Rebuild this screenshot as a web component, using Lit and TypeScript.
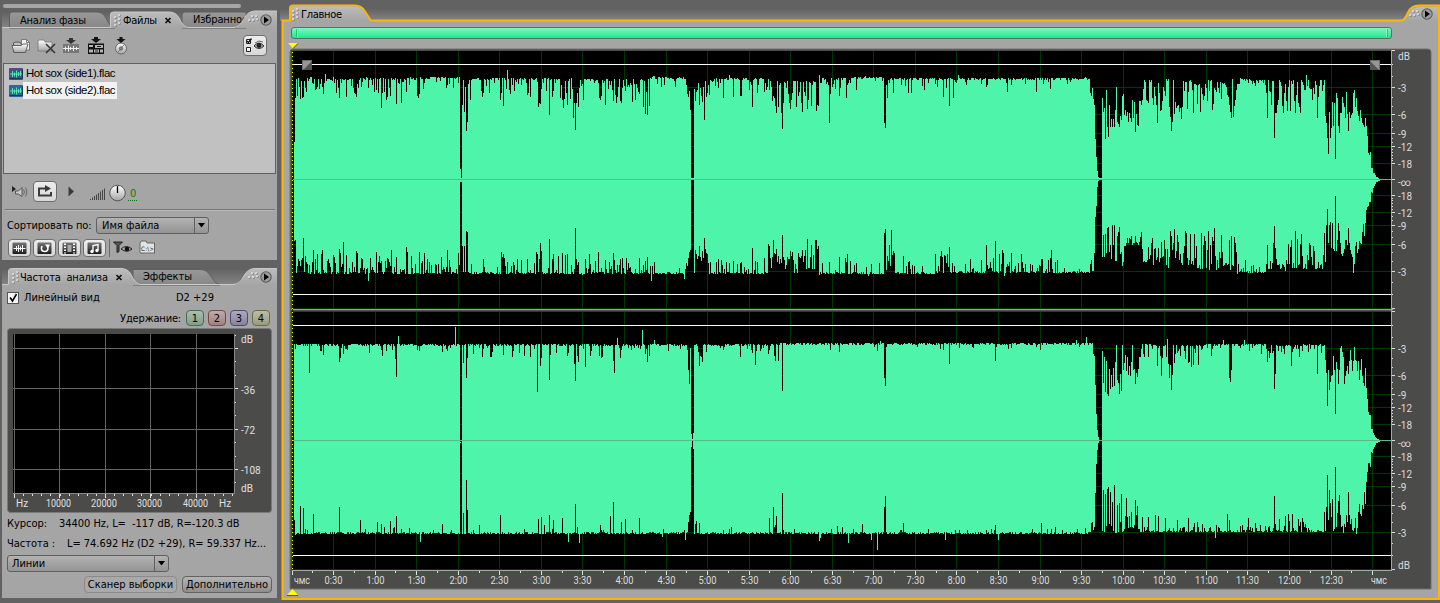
import { LitElement, html, svg, css } from 'lit';
import { customElement } from 'lit/decorators.js';

/* ---------- waveform envelopes ---------- */

type Seg = [number, number, number, number, number]; // from, to, base, spike chance, spike depth

const START = 294;
const END = 1380;

function rng(seed: number) {
  let s = seed;
  return () => {
    s = (s * 1664525 + 1013904223) >>> 0;
    return s / 4294967296;
  };
}

/** dir = 1 for an upper edge (spikes go down), -1 for a lower edge (spikes go up). */
function edge(seed: number, dir: number, segs: Seg[], marks: string): number[] {
  const r = rng(seed);
  const out: number[] = [];
  for (let x = START; x < END; x++) {
    const s = segs.find((g) => x >= g[0] && x < g[1]) ?? segs[segs.length - 1];
    const jitter = Math.floor(r() * 2.6) - 0.6;
    const a = r();
    const b = r();
    const d = a < s[3] ? 3 + b * b * s[4] : jitter;
    out.push(Math.round(s[2] + dir * d));
  }
  for (const m of marks.trim().split(/\s+/)) {
    const [x, y] = m.split(':').map(Number);
    if (x >= START && x < END) out[x - START] = y;
  }
  return out;
}

function fill(top: number[], bottom: number[]): string {
  let d = '';
  top.forEach((t, i) => {
    if (bottom[i] > t) d += `M${START + i} ${t}h1V${bottom[i]}h-1z`;
  });
  return d;
}

const top1 = edge(11, 1, [
  [294, 360, 80, 0.4, 12], [360, 400, 79, 0.35, 12], [400, 416, 79, 0.4, 12], [416, 460, 78, 0.18, 8],
  [462, 560, 79, 0.38, 12], [560, 583, 80, 0.6, 18], [583, 602, 80, 0.12, 5], [602, 649, 80, 0.55, 20],
  [649, 686, 78, 0.15, 6], [686, 700, 84, 0.6, 14], [700, 714, 82, 0.6, 20], [714, 770, 79, 0.35, 12],
  [770, 818, 82, 0.6, 24], [818, 850, 79, 0.3, 8], [850, 884, 78, 0.1, 5], [884, 1090, 79, 0.12, 8],
  [1102, 1140, 117, 0.3, 12], [1140, 1170, 82, 0.7, 26], [1170, 1182, 105, 0.5, 12], [1182, 1222, 81, 0.72, 26],
  [1222, 1238, 84, 0.5, 18], [1238, 1266, 80, 0.25, 8], [1266, 1325, 81, 0.72, 30], [1325, 1354, 108, 0.6, 16],
  [1354, 1380, 115, 0.5, 8],
], `
294:142 295:98 296:79 297:96 298:78 299:87 300:99 301:81 302:98 303:97 305:88 307:78 308:81 310:77 311:77 313:84 315:90
322:87 323:94 325:74 333:77 336:93 339:98 341:83 346:97 347:80 348:80 353:88 354:93 355:94 356:97 366:77 369:80 374:92 376:90 381:108
382:93 386:100 387:97 389:88 390:96 394:80 396:104 399:84 401:103 406:92 410:77 417:96 418:98 419:94 420:77 423:89 438:77
446:88 447:85 449:84 453:88 460:169 461:178 462:105 463:80 464:112 465:87 466:131 467:122 468:84 470:100 482:97 483:93 500:100 501:93
503:106 507:70 510:94 514:91 527:95 530:97 538:107 539:103 540:104 541:89 549:115 552:97 562:100 563:108 564:99 566:93
567:105 568:81 571:78 573:118 574:103 575:130 576:103 577:93 578:107 579:88 580:80 583:100 599:98 600:100 601:96 605:105 608:89 613:101
615:95 617:97 621:103 635:100 638:92 639:94 643:107 645:114 647:115 649:106 653:76 654:76 687:94 688:97 689:91 690:110 691:178 692:178 693:178
696:92 697:90 699:105 701:96 702:102 703:87 704:120 706:97 710:80 723:98 729:75 733:97 740:96 741:96 742:80 752:107 757:93
764:92 769:90 773:96 774:98 775:106 776:113 778:107 781:113 782:129 783:103 788:94 790:109 791:100 792:93 798:96 799:92 801:103
802:112 804:92 805:96 807:109 811:106 816:111 817:105 818:106 819:75 828:85 829:123 830:94 835:89 839:96 846:98 847:85 856:90 
865:76 884:123 885:128 886:85 887:98 893:93 905:86 908:93 911:93 924:90 937:87 943:97 949:106 953:98 955:82 956:83 958:75
986:87 1007:92 1036:92 1080:79 1085:77 1088:79 1090:93 1091:96 1092:88 1093:99 1094:105 1095:139 1096:157 1097:171 1098:177 1099:178 1100:178 1101:178
1102:98 1103:112 1104:108 1105:139 1106:90 1107:127 1108:137 1109:105 1110:127 1111:119 1112:127 1113:119 1114:127 1115:110 1116:87 1117:122
1118:124 1119:127 1120:116 1121:120 1122:96 1123:94 1124:115 1125:110 1126:116 1127:112 1128:122 1129:113 1130:118 1131:122 1132:100 1133:118
1134:102 1135:132 1136:114 1137:125 1138:126 1139:101 1140:101 1141:105 1142:100 1143:89 1144:80 1145:82 1146:100 1147:101 1148:103 1149:80 1150:82 1151:80
1152:98 1153:105 1156:105 1157:123 1158:83 1159:93 1160:111 1161:110 1162:101 1163:87 1164:91 1166:79 1167:81 1168:79 1169:107 1170:117 1171:131
1172:122 1173:80 1174:114 1175:102 1179:112 1181:119 1182:107 1193:113 1200:112 1228:97 1229:105 1230:112 1231:118 1232:79 1233:117 1234:106 1235:100 1236:90 1240:78
1267:118 1268:80 1271:105 1272:81 1273:81 1274:138 1275:113 1290:111 1295:113 1300:113 1306:75 1312:100 1317:118 1321:80 1324:80 1325:116 1326:123 1327:138
1328:154 1329:112 1330:138 1331:128 1332:102 1333:126 1334:103 1335:159 1336:93 1337:98 1338:126 1339:133 1340:113 1341:113 1342:97 1343:103
1344:107 1345:118 1346:92 1348:131 1349:112 1350:118 1351:115 1352:113 1353:93 1354:90 1355:107 1356:98 1357:111 1358:116 1359:121 1360:110
1361:118 1362:123 1363:125 1364:127 1365:118 1366:126 1367:136 1368:153 1369:155 1370:152 1371:168 1372:168 1373:173 1374:173 1375:175 1376:177
1377:177 1378:178 1379:179`);

const bottom1 = edge(23, -1, [
  [294, 340, 273, 0.5, 20], [340, 376, 273, 0.3, 16], [376, 460, 273, 0.5, 20], [462, 560, 273, 0.25, 14],
  [560, 600, 273, 0.35, 24], [600, 655, 273, 0.45, 16], [655, 686, 273, 0.05, 6], [686, 706, 273, 0.7, 16],
  [706, 768, 273, 0.12, 12], [768, 818, 272, 0.7, 26], [818, 884, 273, 0.15, 12], [884, 895, 271, 0.6, 16],
  [895, 935, 273, 0.15, 8], [935, 1060, 272, 0.4, 15], [1060, 1090, 272, 0.08, 6],
  [1102, 1124, 256, 0.7, 32], [1124, 1142, 246, 0.5, 12], [1142, 1168, 265, 0.75, 26], [1168, 1205, 268, 0.8, 34],
  [1205, 1238, 269, 0.7, 40], [1238, 1266, 272, 0.3, 12], [1266, 1325, 268, 0.75, 34], [1325, 1380, 245, 0.6, 18],
], `
294:241 295:240 296:273 297:266 298:259 301:260 303:238 311:272 313:250 315:259 317:254 322:250 339:249 340:253 342:264 343:242 346:255
356:251 357:253 361:258 362:259 368:281 379:256 380:263 387:258 388:259 396:257 406:247 407:252 419:252 427:259 429:262 441:257 447:250 449:260
460:182 461:182 462:246 463:272 464:246 465:272 466:231 467:232 483:259 501:252 502:257 503:254 534:263 536:252 537:254 540:243 541:251
549:239 553:254 558:256 562:253 567:254 571:265 575:228 576:259 577:265 578:262 582:275 613:253 614:260 622:258 626:258 639:258 647:257
651:281 684:279 687:266 688:258 689:252 690:250 691:180 692:180 693:180 694:273 695:250 696:254 697:259 698:256 699:246 700:257
701:261 702:251 703:258 704:238 705:249 706:253 707:254 708:263 710:262 726:262 740:263 741:262 752:248 755:261 769:246 773:240
774:253 775:254 776:249 777:262 778:256 779:264 780:259 782:235 783:257 784:260 787:257 789:259 790:251 793:260 798:253 799:257 800:258
802:250 803:262 804:256 807:239 808:268 810:257 811:245 812:269 813:255 814:269 815:240 816:240 817:249 818:246 819:275 822:263 829:262 839:257
845:258 846:262 847:254 856:263 866:267 868:276 884:233 885:229 886:270 887:256 888:261 889:245 890:266 891:230 892:255 893:251 894:253
903:256 908:262 909:261 935:254 938:266 940:256 941:251 945:256 946:263 947:254 949:247 965:264 970:259 981:260 986:245 987:265 995:241
1001:264 1002:250 1003:253 1004:276 1007:264 1009:262 1011:253 1015:266 1022:262 1032:265 1041:259 1042:259 1048:260 1051:250 1057:260
1090:264 1091:260 1092:271 1093:271 1094:253 1095:217 1096:206 1097:187 1098:181 1099:180 1100:180 1101:180 1102:257 1103:235 1104:257
1105:234 1106:253 1107:228 1108:227 1109:252 1110:245 1111:259 1112:225 1113:245 1114:225 1115:261 1116:261 1117:236 1118:232 1119:227
1120:254 1121:252 1122:266 1123:262 1171:236 1172:250 1173:243 1174:229 1175:258 1204:236 1213:241 1229:240 1231:236 1234:237 1237:274
1267:245 1273:243 1274:226 1275:248 1285:271 1325:262 1326:225 1327:209 1328:243 1329:225 1330:222 1331:248 1332:223 1333:249 1334:251
1335:196 1336:251 1337:240 1338:223 1339:231 1340:243 1341:254 1342:256 1343:253 1344:249 1345:240 1346:240 1347:245 1348:228 1349:243
1350:250 1351:254 1352:257 1353:273 1354:264 1355:246 1356:242 1357:253 1358:249 1359:241 1360:243 1361:244 1362:232 1363:224 1364:236
1365:223 1366:210 1367:207 1368:206 1369:202 1370:202 1371:192 1372:193 1373:188 1374:186 1375:184 1376:182 1377:182 1378:181 1379:181`);

const top2 = edge(37, 1, [
  [294, 460, 345, 0.1, 7], [462, 560, 345, 0.14, 10], [560, 650, 345, 0.14, 10], [650, 690, 345, 0.05, 4],
  [694, 780, 345, 0.1, 4], [780, 1093, 344, 0.05, 3], [1102, 1124, 370, 0.7, 20], [1124, 1140, 362, 0.7, 18],
  [1140, 1168, 345, 0.3, 16], [1168, 1204, 346, 0.5, 20], [1204, 1228, 345, 0.12, 12], [1228, 1266, 345, 0.1, 6],
  [1266, 1300, 346, 0.4, 18], [1300, 1325, 345, 0.3, 10], [1325, 1352, 357, 0.7, 18], [1352, 1380, 362, 0.7, 12],
], `
309:373 320:351 323:355 339:362 340:358 382:356 386:351 395:359 396:377 398:336 417:350 419:351 455:327 460:442 461:440 462:345 463:363 464:345
466:378 467:358 490:357 503:355 512:357 524:356 530:357 537:392 540:366 541:358 549:380 556:353 567:356 574:364 575:381 577:356 578:362
585:367 613:361 614:373 617:338 642:330 645:354 647:362 649:356 654:340 687:350 688:370 689:384 690:348 691:434 692:439 693:433 694:345 698:352
699:366 700:356 701:357 702:362 723:350 724:347 740:357 752:353 755:365 756:351 768:354 769:350 774:356 775:361 778:361 782:391 830:350 839:352
877:351 880:341 884:378 885:386 940:349 943:350 949:364 995:361 996:347 1011:348 1063:343 1076:340 1086:337 1093:354 1094:356 1095:385 1096:414
1097:430 1098:437 1099:440 1100:440 1101:440 1102:351 1103:383 1104:357 1105:392 1106:361 1107:394 1108:396 1109:369 1110:389 1111:375 1112:387 1113:368
1114:386 1115:362 1116:345 1117:380 1118:383 1119:394 1120:374 1121:391 1122:345 1123:370 1124:363 1125:355 1126:371 1127:357 1128:375 1129:366
1130:376 1131:362 1132:345 1133:370 1134:369 1135:384 1136:373 1137:377 1138:369 1139:357 1140:357 1144:357 1157:366 1161:376 1167:339 1169:378
1170:365 1171:390 1172:375 1173:345 1174:363 1193:365 1223:340 1229:378 1230:382 1231:370 1244:340 1267:362 1274:389 1275:374 1317:374 1325:360
1326:373 1327:406 1328:370 1329:390 1330:382 1331:376 1335:414 1336:362 1337:369 1338:384 1339:370 1340:348 1341:346 1342:352 1343:357 1344:384
1345:376 1346:371 1350:350 1352:371 1354:347 1355:360 1356:361 1359:380 1360:370 1361:359 1362:376 1363:383 1364:386 1365:368 1366:388 1367:399
1368:412 1369:415 1370:415 1371:429 1372:429 1373:433 1374:435 1375:437 1376:438 1377:439 1378:439 1379:440`);

const bottom2 = edge(53, -1, [
  [294, 460, 533, 0.08, 5], [462, 690, 533, 0.08, 5], [690, 1090, 533, 0.05, 4], [1102, 1124, 528, 0.75, 28],
  [1124, 1140, 528, 0.7, 20], [1140, 1266, 531, 0.3, 14], [1266, 1325, 531, 0.3, 16], [1325, 1380, 526, 0.8, 18],
], `
294:520 295:535 300:506 303:508 313:514 339:507 360:520 377:522 381:524 390:521 396:516 420:542 442:524 460:443 461:441 462:534 463:513 466:480 467:510
500:515 538:519 541:517 549:515 553:520 562:518 568:542 575:504 579:543 610:516 613:502 621:522 625:519 639:518 662:537 685:540 688:522 689:515
690:512 691:447 692:441 693:449 694:534 695:524 696:521 699:523 769:518 773:507 775:525 776:516 782:493 783:530 819:541 820:538 848:543
862:524 871:540 877:550 884:507 885:496 903:523 945:540 995:525 998:540 1041:523 1090:532 1093:530 1094:527 1095:493 1096:464 1097:450
1098:443 1099:441 1100:441 1101:441 1102:531 1103:490 1104:532 1105:494 1106:526 1107:489 1108:487 1109:524 1110:492 1111:526 1112:502 1113:531
1114:485 1115:533 1116:533 1117:505 1118:532 1119:503 1120:522 1121:494 1122:532 1123:531 1126:498 1129:516 1131:512 1135:500 1136:515 1137:506
1215:538 1274:496 1275:524 1325:531 1326:507 1327:475 1328:520 1329:490 1330:503 1331:517 1332:499 1333:531 1334:529 1335:467 1336:527 1337:513
1338:501 1339:495 1340:515 1341:527 1342:526 1343:533 1344:524 1345:527 1346:515 1347:522 1348:492 1349:515 1350:524 1351:519 1352:530 1353:531
1354:528 1355:518 1356:534 1357:528 1358:512 1359:504 1360:514 1361:516 1362:505 1363:509 1364:492 1365:504 1366:482 1367:472 1368:463 1369:463
1370:467 1371:452 1372:453 1373:449 1374:447 1375:445 1376:443 1377:443 1378:442 1379:442`);

/* ---------- shared pieces ---------- */

const closeX = (x: number, y: number) => svg`<path d="M${x} ${y}l5 5m0-5l-5 5" stroke="#111" stroke-width="1.7" fill="none"/>`;

const dots = (x: number, y: number, pts: number[][]) =>
  pts.map(([a, b]) => svg`<rect x=${x + a} y=${y + b} width="2" height="2" fill="#d4d4d4"/><path d="M${x + a + 2.5} ${y + b + 1}v1.5h-1.5" stroke="#777" stroke-width=".6" fill="none"/>`);

const grip = [[0, 2], [0, 6], [0, 10], [4, 0], [4, 4], [4, 8]];
const cornerGrip = [[0, 5], [4, 5], [3, 1], [7, 1], [8, 4]];

const playDisc = (x: number, y: number) => svg`
  <circle cx=${x} cy=${y} r="5.2" fill="#9c9c9c" stroke="#5a5a5a" stroke-width="1.1"/>
  <path d="M${x - 2} ${y - 3.5}l5 3.5l-5 3.5z" fill="#000"/>`;

const defs = svg`<defs>
  <linearGradient id="strip" x1="0" x2="0" y1="0" y2="1"><stop offset="0" stop-color="#606060"/><stop offset="1" stop-color="#858585"/></linearGradient>
  <linearGradient id="tab" x1="0" x2="0" y1="0" y2="1"><stop offset="0" stop-color="#bcbcbc"/><stop offset="1" stop-color="#a5a5a5"/></linearGradient>
  <linearGradient id="idle" x1="0" x2="0" y1="0" y2="1"><stop offset="0" stop-color="#989898"/><stop offset="1" stop-color="#878787"/></linearGradient>
  <linearGradient id="green" x1="0" x2="0" y1="0" y2="1"><stop offset="0" stop-color="#7ff7c4"/><stop offset=".45" stop-color="#4ff3a9"/><stop offset="1" stop-color="#1fe48c"/></linearGradient>
  <linearGradient id="metal" x1="0" x2="0" y1="0" y2="1"><stop offset="0" stop-color="#fff"/><stop offset="1" stop-color="#a4a4a4"/></linearGradient>
  <linearGradient id="dark" x1="0" x2="0" y1="0" y2="1"><stop offset="0" stop-color="#777"/><stop offset="1" stop-color="#1c1c1c"/></linearGradient>
</defs>`;

const base = css`
  :host { display: block; font-family: "DejaVu Sans Condensed", "DejaVu Sans", sans-serif; font-stretch: condensed; font-size: 11px; color: #000; }
  svg { display: block; flex: none; overflow: visible; }
  svg text { font-size: 11px; }
  .panel { background: #a5a5a5; display: flex; flex-direction: column; }
  .row { display: flex; align-items: center; box-sizing: border-box; }
  .btn { display: flex; align-items: center; justify-content: center; box-sizing: border-box; border: 1px solid #626262; border-radius: 4px; background: linear-gradient(#b4b4b4, #8f8f8f); white-space: nowrap; }
  .lit { background: linear-gradient(#ededed, #d8d8d8); border-color: #6e6e6e; }
  .select { display: flex; box-sizing: border-box; height: 17px; border: 1px solid #5f5f5f; border-radius: 3px; background: linear-gradient(#b2b2b2, #949494); line-height: 15px; }
  .select span { flex: 1; }
  .select svg { border-left: 1px solid #5f5f5f; }
`;

const arrow = svg`<path d="M3 5h7l-3.5 4.5z" fill="#000"/>`;

/* ---------- files panel ---------- */

@customElement('files-panel')
class FilesPanel extends LitElement {
  static styles = [base, css`
    .panel { height: 249px; }
    .tools { height: 35px; padding: 0 10px 0 9px; justify-content: space-between; }
    .eye { width: 24px; height: 21px; }
    .list { height: 111px; box-sizing: border-box; margin: 0 1px; border: 1px solid #5f5f5f; background: #c1c1c1; padding-top: 1px; }
    .file { height: 17px; padding-left: 5px; }
    .name { height: 17px; line-height: 17px; padding: 0 2px 0 3px; letter-spacing: -0.42px; font-family: "Liberation Sans", sans-serif; font-size: 11.4px; white-space: pre; }
    .picked { background: #f2f2f2; }
    .play { height: 35px; padding-left: 9px; }
    .loop { width: 24px; height: 21px; margin-left: 6px; }
    .rule { height: 1px; margin: 0 2px 0 3px; background: #777; border-bottom: 1px solid #b4b4b4; }
    .sort { height: 28px; padding-left: 5px; }
    .label { width: 89px; letter-spacing: -0.12px; white-space: nowrap; }
    .names { width: 113px; padding-left: 5px; }
    .kinds { height: 20px; padding-left: 6px; gap: 2px; align-items: flex-start; }
    .kind { width: 23px; height: 18px; }
    .cmd { font-size: 6px; }
  `];

  fileRow(name: string, tint: string, picked: boolean) {
    return html`<div class="row file">
      <svg width="14" height="12"><rect width="14" height="12" rx="1" fill=${tint} /><path d="M.5 10.5h13v-9" stroke="#1f3355" fill="none"/>
        <path d="M1 6h12M3.5 3v6M5.5 4.5v4M7.5 2.5v7M9.5 4v4M11.5 3v5" stroke="#57e6ae" fill="none"/></svg>
      <span class="name ${picked ? 'picked' : ''}">${name}</span></div>`;
  }

  render() {
    return html`<div class="panel">
      <svg width="275" height="17" viewBox="2 11 275 17">
        ${defs}
        <rect x="2" y="11" width="275" height="17" fill="url(#strip)"/>
        <path d="M9.500 28V15q0-3 3-3H97q6 0 9 6q4 9 9 10z" fill="url(#idle)" stroke="#5f5f5f"/>
        <path d="M182 28V15q0-3 3-3H246v16z" fill="url(#idle)" stroke="#5f5f5f"/>
        <path d="M110 28V15q0-3 3-3H169q7 0 10 6q4 9 9 10z" fill="url(#tab)"/>
        <path d="M2 27.500H110.500V15q0-3 3-3H169q7 0 10 6q4 9 9 9.500H235" fill="none" stroke="#c9c9c9"/>
        <text x="20" y="23.500" textLength="66">Анализ фазы</text>
        <text x="123" y="24" textLength="34">Файлы</text>${closeX(165.5, 18)}
        <text x="193" y="23" textLength="55">Избранное</text>
        <path d="M233 28q7 0 11-9q4-8 11-8H277V28z" fill="url(#tab)"/>
        <path d="M233 27.500q7 0 11-9q4-7.500 11-7.500H277" fill="none" stroke="#c9c9c9"/>
        ${dots(114, 14, grip)}${dots(248, 14, cornerGrip)}${playDisc(266, 20)}
      </svg>
      <div class="row tools">
        <svg width="120" height="20" viewBox="11 36 120 20">
          <path d="M13.500 52V43l2-1h4l1 1.500h5V52z" fill="#bdbdbd" stroke="#555"/>
          <path d="M21.500 39.500h5l3 3v7.500h-8z" fill="#f2f2f2" stroke="#666" stroke-width=".8"/><path d="M26.500 39.500v3h3" fill="none" stroke="#666" stroke-width=".8"/>
          <path d="M12 45.500h9l2-1.500h5l-2.500 8.500H14z" fill="url(#metal)" stroke="#555" stroke-width=".9"/>
          <path d="M38 51V41l1-1h5l1 2h7v9z" fill="url(#metal)" stroke="#777" stroke-width=".8"/>
          <path d="M46 44l9 9m0-9l-9 9" stroke="#333" stroke-width="1.500"/>
          <rect x="63" y="44" width="16" height="9" fill="#777"/><path d="M63 48.500h16M65.500 46.500v4M68.500 45.500v6M70.500 47v3M73.500 46v5M76.500 47v3" stroke="#eee"/>
          <path d="M69 38h4v2h3l-5 4l-5-4h3z" fill="#333"/>
          <rect x="88" y="43.500" width="16" height="10.500" fill="#111"/><path d="M89 45h4v2h-4zM95 45h8v3H95zM89 49.500h4v3h-4zM94 49.500h5v3h-5zM100 49.500h3v3h-3z" fill="#b4b4b4"/><path d="M97 46.500h4M95 51h3" stroke="#222"/>
          <path d="M94 37h4v2h3l-5 4l-5-4h3z" fill="#111"/>
          <circle cx="121" cy="48.500" r="5.500" fill="url(#metal)" stroke="#666"/><circle cx="121" cy="48.500" r="1.600" fill="#888" stroke="#444" stroke-width=".7"/><path d="M122 47l3-3M120 50l-3 3" stroke="#777"/>
          <path d="M119.500 37h3v2h3l-4.500 4l-4.500-4h3z" fill="#111"/>
        </svg>
        <div class="btn lit eye"><svg width="20" height="17">
          <path d="M1.500 2.500h4v4h-4zM1.500 10.500h4v4h-4z" fill="#fff" stroke="#222"/><path d="M2 4l1.500 1.500L6.500 1.500" fill="none" stroke="#111" stroke-width="1.300"/>
          <path d="M9 9q5-6 10 0q-5 5-10 0z" fill="#aaa" stroke="#333"/><circle cx="14" cy="8.500" r="2.400" fill="#222"/><path d="M10 6q4-3.500 8-1" stroke="#666" fill="none"/></svg></div>
      </div>
      <div class="list">
        ${this.fileRow('Hot sox (side1).flac', '#4d4a8d', false)}
        ${this.fileRow('Hot sox (side2).flac', '#2c65a0', true)}
      </div>
      <div class="row play">
        <svg width="16" height="14"><path d="M1 1l4 3l-4 3z" fill="#222"/><path d="M4.500 6h3l3.500-3.500v9L7.500 9h-3z" fill="#ccc" stroke="#555"/><path d="M12.500 4.500q2 2.500 0 5M14.500 2.500q3 4.500 0 9" fill="none" stroke="#666"/></svg>
        <div class="btn lit loop"><svg width="16" height="13"><path d="M8 3.500H2v7h12V7" fill="none" stroke="#3a3a3a" stroke-width="2"/><path d="M8 0l6 3.500L8 7z" fill="#3a3a3a"/></svg></div>
        <svg width="86" height="20" viewBox="57 182 86 20">
          <path d="M68.500 186.500l5.500 5l-5.500 5z" fill="#3c3c3c"/>
          ${[0, 1, 2, 3, 4, 5, 6, 7].map((i) => svg`<path d="M${90.5 + i * 2} 200v${-1 - i * 1.5}" stroke="#444"/>`)}
          <circle cx="117.500" cy="193" r="7.800" fill="url(#metal)" stroke="#555"/><path d="M117.500 186v7" stroke="#000" stroke-width="1.300"/>
          <text x="130" y="197" fill="#087a08">0</text><path d="M128 200.500h9" stroke="#087a08" stroke-dasharray="1 1"/>
        </svg>
      </div>
      <div class="rule"></div>
      <div class="row sort"><span class="label">Сортировать по:</span>
        <div class="select names"><span>Имя файла</span><svg width="13" height="15">${arrow}</svg></div></div>
      <div class="row kinds">
        ${[
          svg`<path d="M1.500 6.500h12M4.500 4v5M6.500 3v7M8.500 4.500v4M10.500 3v7" stroke="#fff"/>`,
          svg`<path d="M5 4q-2 5 2.500 5.500q4.500 0 3-5" fill="none" stroke="#fff" stroke-width="1.600"/><path d="M8 2.500h5l-2 4z" fill="#fff"/>`,
          svg`<path d="M3 1.500v10M12 1.500v10" stroke="#fff" stroke-width="2" stroke-dasharray="1.500 1.500"/><path d="M5.500 3h4v7h-4z" fill="#aaa"/>`,
          svg`<path d="M6 9V3.500l5-1V8" fill="none" stroke="#fff" stroke-width="1.300"/><circle cx="5" cy="9.500" r="1.700" fill="#fff"/><circle cx="10" cy="8.500" r="1.700" fill="#fff"/>`,
        ].map((g) => html`<div class="btn lit kind"><svg width="15" height="13"><rect x=".5" y=".5" width="14" height="11.500" rx="1" fill="url(#dark)"/>${g}</svg></div>`)}
        <svg width="50" height="18" viewBox="108 239 50 18"><path d="M109.500 239v18" stroke="#686868"/>
          <path d="M113.500 242h9l-3.500 3.500v6l-2 1v-7z" fill="#555" stroke="#222"/><path d="M121 249q5-5 11 0q-5 4.500-11 0z" fill="#aaa" stroke="#222"/><circle cx="127" cy="249" r="2.300" fill="#111"/>
          <path d="M140 253V243l1-2h5l1 2h7.500v10z" fill="#e3e3e3" stroke="#666"/><text class="cmd" x="141" y="251" textLength="13">C:\\&gt;</text></svg>
      </div>
    </div>`;
  }
}

/* ---------- frequency analysis panel ---------- */

@customElement('frequency-panel')
class FrequencyPanel extends LitElement {
  static styles = [base, css`
    .panel { height: 330px; }
    .mode { height: 25px; padding-left: 5px; }
    .mode span { margin-left: 5px; width: 152px; font-size: 11px; }
    .hold { height: 18px; padding-left: 118px; align-items: flex-start; }
    .hold span { width: 66px; line-height: 17px; white-space: nowrap; letter-spacing: -0.15px; }
    .num { width: 18px; height: 16px; margin-right: 4px; }
    .n1 { background: linear-gradient(#a9bfae, #7f9e87); border-color: #4b6b54; }
    .n2 { background: linear-gradient(#c0aaaa, #a18080); border-color: #6e4c4c; }
    .n3 { background: linear-gradient(#adaabf, #8880a0); border-color: #4c4a6e; }
    .n4 { background: linear-gradient(#bcbca6, #9c9c7b); border-color: #6a6a4a; }
    .chart { margin-left: 5px; }
    .chart text { fill: #e0e0e0; font: 10px Roboto, sans-serif; }
    .read { height: 20px; padding-left: 5px; white-space: pre; letter-spacing: -0.04px; }
    .read b { font-weight: normal; width: 52px; }
    .read .wide { width: 60px; }
    .lines { width: 162px; margin: 2px 0 4px 5px; padding-left: 4px; }
    .foot { gap: 5px; padding-left: 82px; }
    .scan { width: 93px; height: 17px; border-color: #8a8a8a; background: #a9a9a9; }
    .more { width: 90px; height: 17px; }
  `];

  render() {
    const minorY = [335.5, 361.5, 375.5, 402.5, 415.5, 442.5, 456.5, 482.5];
    return html`<div class="panel">
      <svg width="275" height="17" viewBox="2 268 275 17">
        ${defs}
        <rect x="2" y="268" width="275" height="17" fill="url(#strip)"/>
        <path d="M133 285V269.500H201q6 0 10 7q4 7 9 8.500z" fill="url(#idle)" stroke="#5f5f5f"/>
        <path d="M9 285V271q0-2.500 3-2.500H121q7 0 10 6q4 9 9 10.500z" fill="url(#tab)"/>
        <path d="M2 284.500H8.500V271q0-2.500 3-2.500H121q7 0 10 6q4 9 9 10H235" fill="none" stroke="#c9c9c9"/>
        <text x="20" y="281" textLength="88" xml:space="preserve">Частота  анализа</text>${closeX(116.5, 275)}
        <text x="143" y="280" textLength="49">Эффекты</text>
        <path d="M233 285q7 0 11-9q4-7.500 11-7.500H277V285z" fill="url(#tab)"/>
        <path d="M233 284.500q7 0 11-9q4-7 11-7H277" fill="none" stroke="#c9c9c9"/>
        ${dots(12, 271, grip)}${dots(248, 271, cornerGrip)}${playDisc(266, 277)}
      </svg>
      <div class="row mode"><svg width="12" height="12"><rect x=".5" y=".5" width="11" height="11" fill="#f4f4f4" stroke="#555"/><path d="M3 5.500l2.500 3.500l4-7" fill="none" stroke="#000" stroke-width="1.600"/></svg>
        <span>Линейный вид</span>D2 +29</div>
      <div class="row hold"><span>Удержание:</span>
        ${[1, 2, 3, 4].map((n) => html`<div class="btn num n${n}">${n}</div>`)}</div>
      <svg class="chart" width="265" height="185" viewBox="7 328 265 185">
        <rect x="7.500" y="328.500" width="264" height="184" rx="3" fill="#4b4b49" stroke="#7a7a7a"/>
        <rect x="13" y="334" width="221" height="159" fill="#000"/>
        <path d="M14.500 334v159M59.500 334v159M105.500 334v159M150.500 334v159M196.500 334v159M13 348.500h220M13 388.500h220M13 429.500h220M13 469.500h220" stroke="#666"/>
        <path d="M13 493.500h221.500V334" fill="none" stroke="#8a8a8a"/>
        <path d="M14.500 494v4M59.500 494v4M105.500 494v4M150.500 494v4M196.500 494v4M235 348.500h3M235 388.500h3M235 429.500h3M235 469.500h3" stroke="#e0e0e0"/>
        ${Array.from({ length: 25 }, (_, i) => svg`<path d="M${Math.round(14 + i * 9.1) + 0.5} 494v2" stroke="#e0e0e0"/>`)}
        ${minorY.map((y) => svg`<path d="M235 ${y}h1" stroke="#e0e0e0"/>`)}
        <text x="241" y="343">dB</text><text x="241" y="393.500">-36</text><text x="241" y="434">-72</text><text x="241" y="474">-108</text><text x="241" y="492">dB</text>
        <g><text x="16" y="507">Hz</text><text x="46" y="507" textLength="25" lengthAdjust="spacingAndGlyphs">10000</text><text x="91" y="507" textLength="26" lengthAdjust="spacingAndGlyphs">20000</text><text x="137" y="507" textLength="25" lengthAdjust="spacingAndGlyphs">30000</text><text x="183" y="507" textLength="25" lengthAdjust="spacingAndGlyphs">40000</text><text x="219" y="507">Hz</text></g>
      </svg>
      <div class="row read"><b>Курсор:</b>34400 Hz, L=  -117 dB, R=-120.3 dB</div>
      <div class="row read"><b class="wide">Частота :</b>L= 74.692 Hz (D2 +29), R= 59.337 Hz...</div>
      <div class="select lines"><span>Линии</span><svg width="13" height="15">${arrow}</svg></div>
      <div class="row foot"><div class="btn scan">Сканер выборки</div><div class="btn more">Дополнительно</div></div>
    </div>`;
  }
}

/* ---------- main waveform view ---------- */

@customElement('wave-view')
class WaveView extends LitElement {
  static styles = [base, css`
    .scale text { fill: #dcdcdc; font: 10px Roboto, sans-serif; }
    .crisp { shape-rendering: crispEdges; }
  `];

  render() {
    const tick = (k: number) => Math.floor(292 + k * 41.56) + 0.5;
    const label = (k: number) => `${Math.floor(k / 2)}:${k % 2 ? '30' : '00'}`;
    const rows = [87, 114, 133, 146, 163, 179, 195, 212, 225, 244, 271];
    const rows2 = rows.map((y) => y + 261);
    const names = ['-3', '-6', '-9', '-12', '-18', '-∞', '-18', '-12', '-9', '-6', '-3'];
    const half = [64, 76, 97, 106, 121, 127, 138, 142, 149, 152, 155, 158, 160];
    const minor = [...half, ...half.map((y) => 358 - y)];
    return html`<svg width="1160" height="603" viewBox="280 0 1160 603">
      ${defs}
      <rect x="280" y="8" width="1160" height="13" fill="url(#strip)"/>
      <path d="M282.500 20.500H290V8q0-2.500 3-2.500H355q7 0 10 6q5 8 6 9H1402q3-1 6-8q3-7 11-7H1439V599H282.500z" fill="#a5a5a5" stroke="#ffb600" stroke-width="2"/>
      <path d="M291 20V9q0-2.500 3-2.500H355q6 0 9 6q4 7 6 8.500zM1403 21q4-3 6-8q3-6 10-6h19v14z" fill="url(#tab)"/>
      ${dots(292, 8, grip)}${dots(1409, 9, cornerGrip)}${playDisc(1427, 14)}
      <text x="301" y="18" textLength="41">Главное</text>
      <rect x="291.500" y="27.500" width="1100" height="11" rx="2.500" fill="url(#green)" stroke="#4f7766"/>
      <path d="M296.500 29v8M1387.500 29v8" stroke="#19c97c"/><path d="M297.500 29v8M1386.500 29v8" stroke="#9dfad0"/>
      <path d="M290 589V52q0-3 3-3H1428q3 0 3 3V589z" fill="#4b4b49" stroke="#717171"/>
      <g class="crisp">
        <rect x="292" y="51" width="1100" height="519" fill="#000"/>
        <path d="M${Array.from({ length: 26 }, (_, k) => `${tick(k + 1)} 51V570`).join('M')}${[...rows, ...rows2].map((y) => `M292 ${y + 0.5}H1391`).join('')}M292 308.500H1391M292 569.500H1391" stroke="#003600"/>
        <path d="M292 64.500H1391M292 294.500H1391M292 325.500H1391M292 555.500H1391" stroke="#f4fff8"/>
        <path d="${fill(top1, bottom1)}${fill(top2, bottom2)}" fill="#4df4a9"/>
        <path d="M292 179.500H1391M292 440.500H1391" stroke="#57bb88"/>
        <path d="M291 309.500H1393" stroke="#9a9f9a"/><path d="M291 310.500H1393" stroke="#555"/><path d="M291 311.500H1393" stroke="#333"/>
        <path d="M292.500 51V570" stroke="#0a2b0a"/><path d="M292.500 52V570" stroke="#ffff00" stroke-dasharray="1 3"/>
        <path d="M292 570.500H1391.500V50" fill="none" stroke="#a6a6a6"/>
        ${Array.from({ length: 27 }, (_, k) => svg`<path d="M${tick(k)} 571v4${k < 26 ? `M${tick(k + 0.5)} 571v2` : ''}" stroke="#dcdcdc"/>`)}
        ${[0, 261].map((o) => svg`${rows.map((y) => svg`<path d="M1392 ${y + o + 0.5}h3" stroke="#dcdcdc"/>`)}${minor.map((y) => svg`<path d="M1392 ${y + o + 0.5}h1" stroke="#dcdcdc"/>`)}`)}
        <path d="M1392 50.500h3M1392 308.500h3M1392 311.500h3M1392 569.500h3" stroke="#dcdcdc"/>
      </g>
      <g><rect x="302.500" y="60.500" width="9" height="9" fill="#969696" stroke="#6d6d6d"/><path d="M303 70h9v-9z" fill="#555"/>
      <rect x="1370.500" y="60.500" width="9" height="9" fill="#969696" stroke="#6d6d6d"/><path d="M1370 61v9h9z" fill="#555"/></g>
      <path d="M288 43h10l-5 5.500zM287 595h11l-5.500-6z" fill="#ff0"/><path d="M287 595.500h11M293 48.500l5-5" stroke="#555500" fill="none"/>
      <g class="scale">
        <text x="1398" y="59.500">dB</text><text x="1398" y="569">dB</text>
        ${[0, 261].map((o) => rows.map((y, i) => svg`<text x="1398" y=${y + o + (i === 5 ? 7 : 5)}>${names[i]}</text>`))}
        <text x="294" y="584" textLength="16" lengthAdjust="spacingAndGlyphs">чмс</text><text x="1371" y="584" textLength="16" lengthAdjust="spacingAndGlyphs">чмс</text>
        ${Array.from({ length: 25 }, (_, k) => svg`<text x=${tick(k + 1)} y="584" text-anchor="middle" textLength=${k + 1 >= 20 ? 23 : 18} lengthAdjust="spacingAndGlyphs">${label(k + 1)}</text>`)}
      </g>
    </svg>`;
  }
}

/* ---------- window ---------- */

@customElement('app-root')
class AppRoot extends LitElement {
  static styles = css`
    :host { display: block; width: 1440px; height: 603px; overflow: hidden; background: #626262; }
    .window { display: flex; height: 603px; }
    .side { display: flex; flex-direction: column; width: 275px; padding: 0 3px 0 2px; gap: 8px; flex: none; }
    .bar { height: 4px; width: 238px; margin: 4px 0 -5px 1px; border-radius: 2px; background: #a6a6a6; }
  `;

  render() {
    return html`<div class="window">
      <div class="side"><div class="bar"></div><files-panel></files-panel><frequency-panel></frequency-panel></div>
      <wave-view></wave-view>
    </div>`;
  }
}
